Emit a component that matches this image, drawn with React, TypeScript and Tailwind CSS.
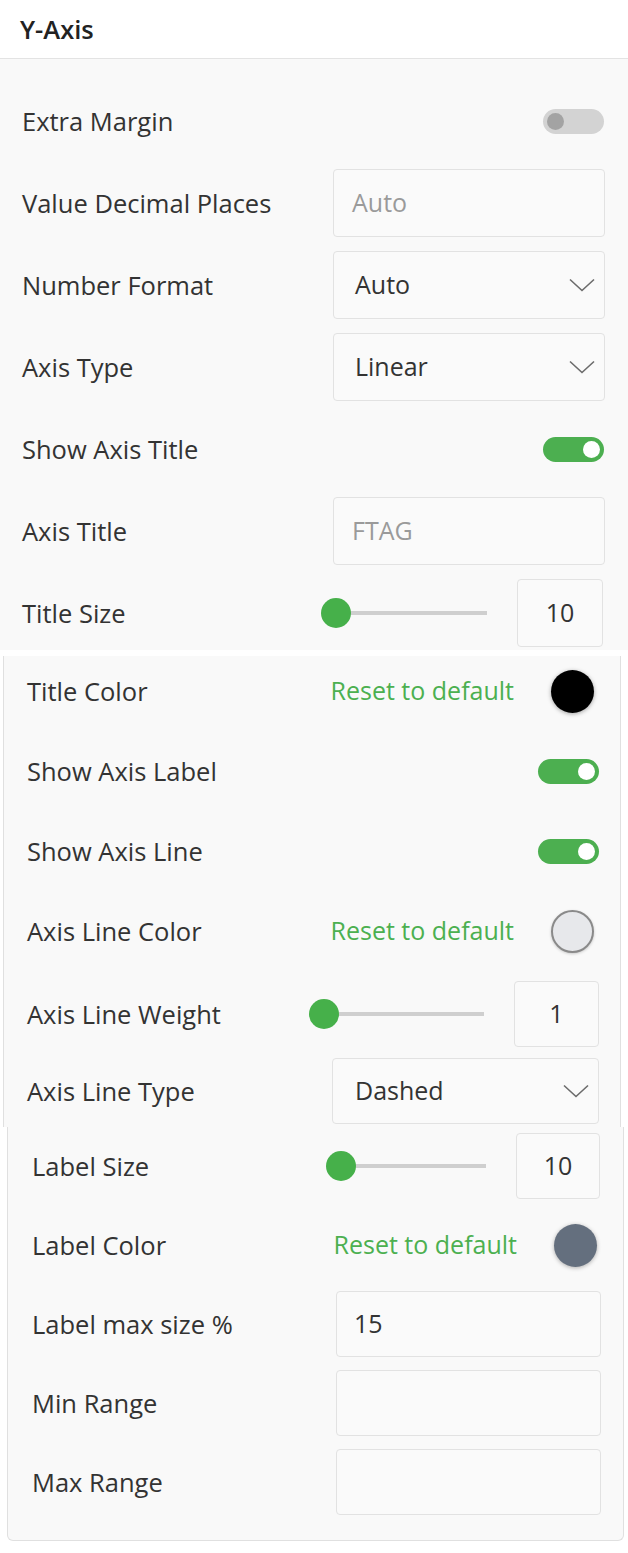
import React from "react";

const font = { fontFamily: '"Open Sans", "Noto Sans", sans-serif' };

function Toggle({ on }: { on: boolean }) {
  return on ? (
    <div className="relative h-[25px] w-[61px] rounded-full bg-[#4caf50]">
      <div className="absolute right-[4px] top-[4px] h-[17px] w-[17px] rounded-full bg-white" />
    </div>
  ) : (
    <div className="relative h-[25px] w-[61px] rounded-full bg-[#d3d3d3]">
      <div className="absolute left-[4px] top-[4px] h-[17px] w-[17px] rounded-full bg-[#a3a3a3]" />
    </div>
  );
}

function Chevron() {
  return (
    <svg width="26" height="14" viewBox="0 0 26 14" fill="none">
      <path d="M1 1.5 L13 12.5 L25 1.5" stroke="#6b6b6b" strokeWidth="1.6" />
    </svg>
  );
}

function TextBox({ w, h, value, placeholder, select, pl }: { w: string; h: string; value?: string; placeholder?: string; select?: boolean; pl: string }) {
  return (
    <div className={`${w} ${h} ${pl} flex items-center justify-between rounded-[4px] border border-[#e2e2e2] bg-[#fafafa] pr-[9px]`}>
      <span className={value ? "text-[25px] text-[#333]" : "text-[25px] text-[#9a9a9a]"}>{value ?? placeholder ?? ""}</span>
      {select && <Chevron />}
    </div>
  );
}

function Slider({ trackW, boxW, boxH, value, gap }: { trackW: string; boxW: string; boxH: string; value: string; gap: string }) {
  return (
    <div className={`flex items-center ${gap}`}>
      <div className={`relative flex h-[30px] ${trackW} items-center`}>
        <div className="ml-[15px] h-[4px] flex-1 bg-[#cfcfcf]" />
        <div className="absolute left-0 top-0 h-[30px] w-[30px] rounded-full bg-[#46b04a]" />
      </div>
      <div className={`${boxW} ${boxH} flex items-center justify-center rounded-[4px] border border-[#e2e2e2] bg-[#fafafa] text-[25px] text-[#333]`}>
        {value}
      </div>
    </div>
  );
}

function ColorPick({ color }: { color: "black" | "light" | "slate" }) {
  const cls =
    color === "black"
      ? "bg-black shadow-[0_1px_4px_rgba(0,0,0,0.35)]"
      : color === "light"
      ? "bg-[#e7e8eb] border-2 border-[#8a8a8a] shadow-[0_1px_3px_rgba(0,0,0,0.2)]"
      : "bg-[#646f7e] shadow-[0_1px_4px_rgba(0,0,0,0.3)]";
  return (
    <div className="flex items-center gap-[37px]">
      <span className="text-[25px] text-[#4cb050]">Reset to default</span>
      <div className={`h-[43px] w-[43px] rounded-full ${cls}`} />
    </div>
  );
}

function Row({ label, h, children }: { label: string; h: string; children: React.ReactNode }) {
  return (
    <div className={`flex ${h} items-center justify-between`}>
      <span className="text-[25.5px] text-[#333]">{label}</span>
      {children}
    </div>
  );
}

export default function App() {
  return (
    <div className="w-[628px] bg-white" style={font}>
      {/* Header */}
      <div className="flex h-[59px] items-center border-b border-[#e3e3e3] bg-white pl-[20px]">
        <span className="text-[25.5px] font-semibold text-[#222]">Y-Axis</span>
      </div>

      {/* Segment 1 */}
      <div className="flex flex-col gap-[14px] bg-[#f9f9f9] pb-[3px] pl-[22px] pr-[23px] pt-[28px]">
        <Row label="Extra Margin" h="h-[68px]">
          <div className="pr-[1px]"><Toggle on={false} /></div>
        </Row>
        <Row label="Value Decimal Places" h="h-[68px]">
          <TextBox w="w-[272px]" h="h-[68px]" pl="pl-[18px]" placeholder="Auto" />
        </Row>
        <Row label="Number Format" h="h-[68px]">
          <TextBox w="w-[272px]" h="h-[68px]" pl="pl-[21px]" value="Auto" select />
        </Row>
        <Row label="Axis Type" h="h-[68px]">
          <TextBox w="w-[272px]" h="h-[68px]" pl="pl-[21px]" value="Linear" select />
        </Row>
        <Row label="Show Axis Title" h="h-[68px]">
          <div className="pr-[1px]"><Toggle on={true} /></div>
        </Row>
        <Row label="Axis Title" h="h-[68px]">
          <TextBox w="w-[272px]" h="h-[68px]" pl="pl-[18px]" placeholder="FTAG" />
        </Row>
        <Row label="Title Size" h="h-[68px]">
          <div className="pr-[2px]">
            <Slider trackW="w-[166px]" gap="gap-[30px]" boxW="w-[86px]" boxH="h-[68px]" value="10" />
          </div>
        </Row>
      </div>

      {/* Segment 2 */}
      <div className="mt-[6px] ml-[3px] mr-[7px] flex flex-col gap-[14px] border-x border-[#e0e0e0] bg-[#f9f9f9] pb-[3px] pl-[23px] pr-[21px] pt-[2px]">
        <Row label="Title Color" h="h-[66px]">
          <div className="pr-[5px]"><ColorPick color="black" /></div>
        </Row>
        <Row label="Show Axis Label" h="h-[66px]">
          <Toggle on={true} />
        </Row>
        <Row label="Show Axis Line" h="h-[66px]">
          <Toggle on={true} />
        </Row>
        <Row label="Axis Line Color" h="h-[66px]">
          <div className="pr-[5px]"><ColorPick color="light" /></div>
        </Row>
        <div className="mt-[3px]">
          <Row label="Axis Line Weight" h="h-[66px]">
            <Slider trackW="w-[175px]" gap="gap-[30px]" boxW="w-[85px]" boxH="h-[66px]" value="1" />
          </Row>
        </div>
        <div className="-mt-[3px]">
          <Row label="Axis Line Type" h="h-[66px]">
            <TextBox w="w-[267px]" h="h-[66px]" pl="pl-[22px]" value="Dashed" select />
          </Row>
        </div>
      </div>

      {/* Segment 3 */}
      <div className="ml-[7px] mr-[4px] flex flex-col gap-[13px] rounded-b-[6px] border-x border-b border-[#e0e0e0] bg-[#f9f9f9] pb-[25px] pl-[24px] pr-[22px] pt-[6px]">
        <Row label="Label Size" h="h-[66px]">
          <div className="pr-[1px]">
            <Slider trackW="w-[160px]" gap="gap-[30px]" boxW="w-[84px]" boxH="h-[66px]" value="10" />
          </div>
        </Row>
        <Row label="Label Color" h="h-[66px]">
          <div className="pr-[4px]"><ColorPick color="slate" /></div>
        </Row>
        <Row label="Label max size %" h="h-[66px]">
          <TextBox w="w-[265px]" h="h-[66px]" pl="pl-[17px]" value="15" />
        </Row>
        <Row label="Min Range" h="h-[66px]">
          <TextBox w="w-[265px]" h="h-[66px]" pl="pl-[17px]" />
        </Row>
        <Row label="Max Range" h="h-[66px]">
          <TextBox w="w-[265px]" h="h-[66px]" pl="pl-[17px]" />
        </Row>
      </div>
      <div className="h-[10px] bg-white" />
    </div>
  );
}
